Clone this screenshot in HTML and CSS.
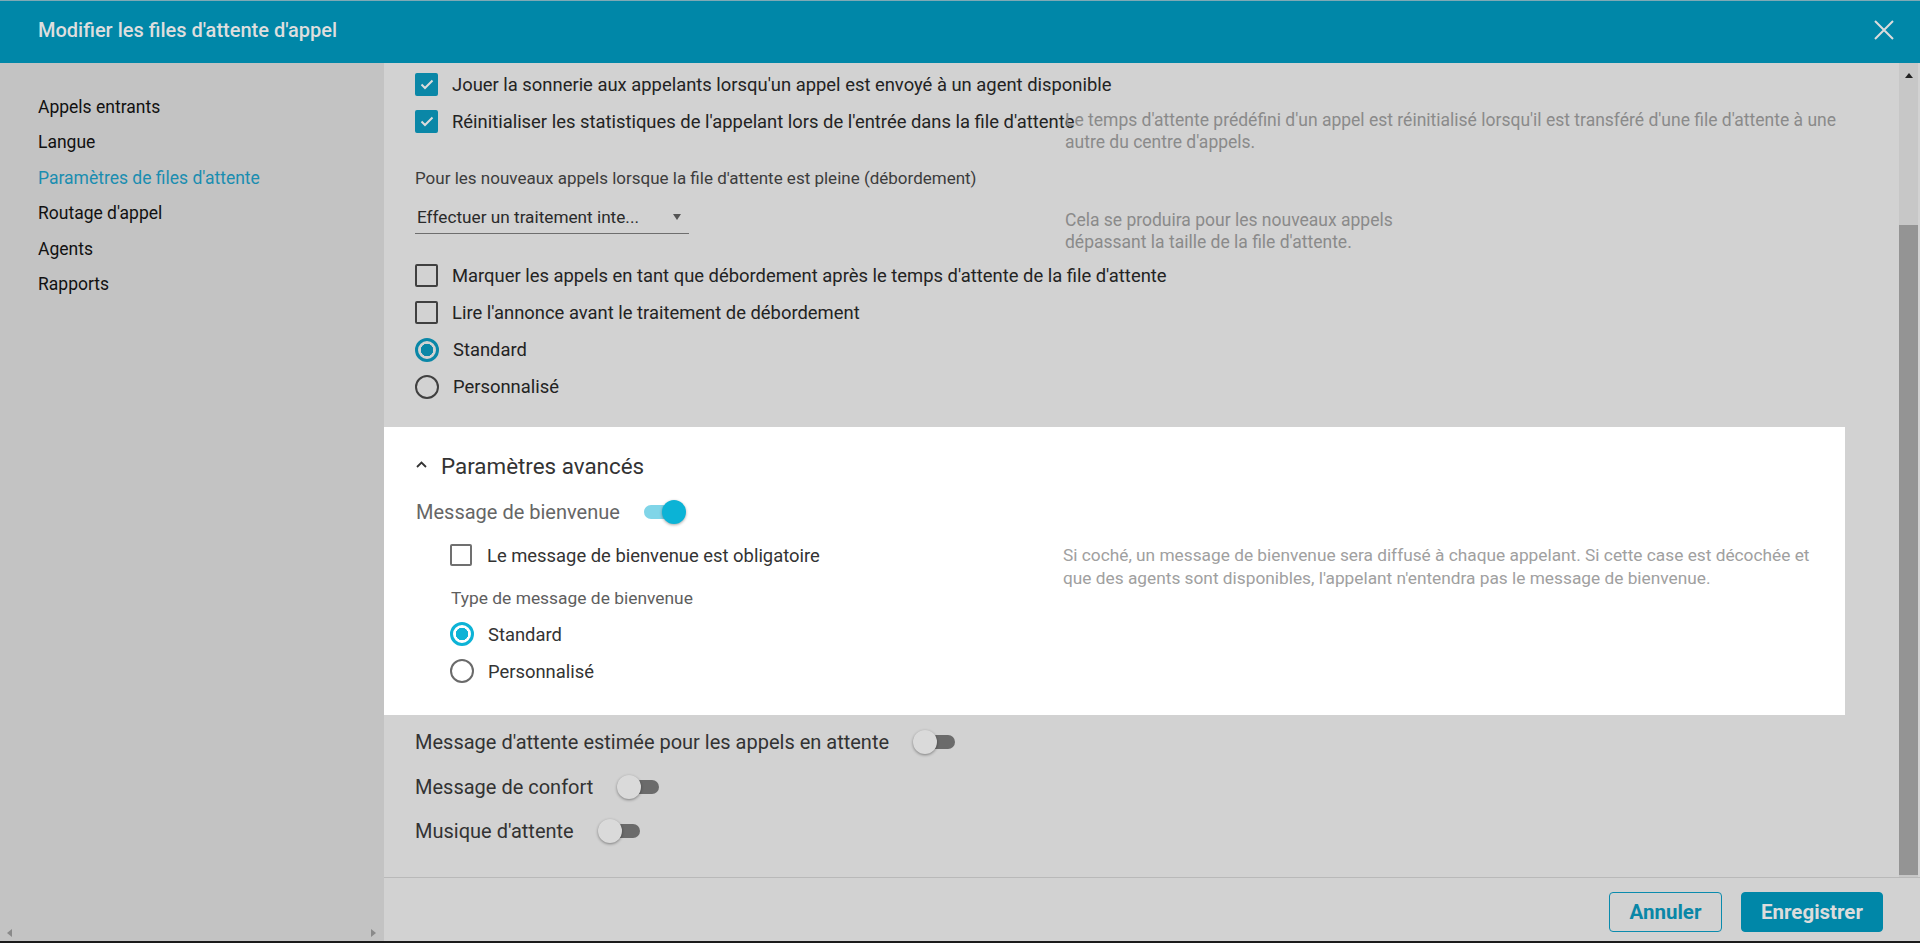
FILE: index.html
```html
<!DOCTYPE html>
<html lang="fr">
<head>
<meta charset="utf-8">
<title>Modifier les files d'attente d'appel</title>
<link rel="stylesheet" href="styles.css">
</head>
<body>
<div class="app">
  <header class="topbar">
    <h1 class="title">Modifier les files d'attente d'appel</h1>
    <span class="close" aria-label="Fermer">
      <svg width="20" height="20" viewBox="0 0 20 20"><path d="M1 1 L19 19 M19 1 L1 19" stroke="#dcdcdc" stroke-width="2" fill="none"/></svg>
    </span>
  </header>
  <div class="body">
    <aside class="sidebar">
      <nav class="nav">
        <div class="nav-item">Appels entrants</div>
        <div class="nav-item">Langue</div>
        <div class="nav-item active">Paramètres de files d'attente</div>
        <div class="nav-item">Routage d'appel</div>
        <div class="nav-item">Agents</div>
        <div class="nav-item">Rapports</div>
      </nav>
      <div class="hscroll">
        <span class="tri-left"></span>
        <span class="tri-right"></span>
      </div>
    </aside>
    <main class="main">
      <div class="scroller">
        <div class="content">
          <div class="row">
            <div class="ctl"><span class="cb checked"><svg width="14" height="11" viewBox="0 0 14 11"><path d="M1.5 5.5 L5 9 L12.5 1.5" stroke="#dcdcdc" stroke-width="2" fill="none"/></svg></span><span class="lbl">Jouer la sonnerie aux appelants lorsqu'un appel est envoyé à un agent disponible</span></div>
          </div>
          <div class="row">
            <div class="ctl"><span class="cb checked"><svg width="14" height="11" viewBox="0 0 14 11"><path d="M1.5 5.5 L5 9 L12.5 1.5" stroke="#dcdcdc" stroke-width="2" fill="none"/></svg></span><span class="lbl">Réinitialiser les statistiques de l'appelant lors de l'entrée dans la file d'attente</span></div>
            <div class="hint">Le temps d'attente prédéfini d'un appel est réinitialisé lorsqu'il est transféré d'une file d'attente à une autre du centre d'appels.</div>
          </div>
          <div class="field-label">Pour les nouveaux appels lorsque la file d'attente est pleine (débordement)</div>
          <div class="row row-dd">
            <div class="ctl">
              <div class="select"><span>Effectuer un traitement inte...</span><span class="dd-arrow"></span></div>
            </div>
            <div class="hint hint-dd">Cela se produira pour les nouveaux appels<br>dépassant la taille de la file d'attente.</div>
          </div>
          <div class="row row-gap">
            <div class="ctl"><span class="cb"></span><span class="lbl">Marquer les appels en tant que débordement après le temps d'attente de la file d'attente</span></div>
          </div>
          <div class="row">
            <div class="ctl"><span class="cb"></span><span class="lbl">Lire l'annonce avant le traitement de débordement</span></div>
          </div>
          <div class="row">
            <div class="ctl"><span class="rb checked"></span><span class="lbl">Standard</span></div>
          </div>
          <div class="row">
            <div class="ctl"><span class="rb"></span><span class="lbl">Personnalisé</span></div>
          </div>

          <section class="panel">
            <div class="panel-head">
              <svg class="chev" width="11" height="7" viewBox="0 0 11 7"><path d="M1 6 L5.5 1.5 L10 6" stroke="#333" stroke-width="1.8" fill="none"/></svg>
              <span>Paramètres avancés</span>
            </div>
            <div class="toggle-row tr-welcome">
              <span class="tlabel muted">Message de bienvenue</span>
              <span class="toggle on"><span class="track"></span><span class="knob"></span></span>
            </div>
            <div class="row prow-cb">
              <div class="ctl ctl-panel"><span class="cb light"></span><span class="lbl lbl-panel">Le message de bienvenue est obligatoire</span></div>
              <div class="hint hint-panel">Si coché, un message de bienvenue sera diffusé à chaque appelant. Si cette case est décochée et que des agents sont disponibles, l'appelant n'entendra pas le message de bienvenue.</div>
            </div>
            <div class="sub-label">Type de message de bienvenue</div>
            <div class="row prow-radio first">
              <div class="ctl ctl-panel"><span class="rb checked bright"></span><span class="lbl lbl-panel">Standard</span></div>
            </div>
            <div class="row prow-radio">
              <div class="ctl ctl-panel"><span class="rb light"></span><span class="lbl lbl-panel">Personnalisé</span></div>
            </div>
          </section>

          <div class="lower">
            <div class="toggle-row lrow">
              <span class="tlabel">Message d'attente estimée pour les appels en attente</span>
              <span class="toggle off"><span class="track"></span><span class="knob"></span></span>
            </div>
            <div class="toggle-row lrow">
              <span class="tlabel">Message de confort</span>
              <span class="toggle off"><span class="track"></span><span class="knob"></span></span>
            </div>
            <div class="toggle-row lrow">
              <span class="tlabel">Musique d'attente</span>
              <span class="toggle off"><span class="track"></span><span class="knob"></span></span>
            </div>
          </div>
        </div>
        <div class="vscroll">
          <span class="tri-up"></span>
          <div class="thumb"></div>
        </div>
      </div>
      <footer class="footer">
        <button class="btn btn-outline">Annuler</button>
        <button class="btn btn-primary">Enregistrer</button>
      </footer>
    </main>
  </div>
  <div class="edge"></div>
</div>
</body>
</html>
```
FILE: styles.css
```css
* { box-sizing: border-box; }
html, body { margin: 0; padding: 0; }
body {
  width: 1920px;
  height: 943px;
  overflow: hidden;
  font-family: Roboto, "Noto Sans", Arial, sans-serif;
  color: #222;
  background: #d2d2d2;
}
.app { display: flex; flex-direction: column; height: 943px; }

/* header */
.topbar {
  height: 63px;
  flex: none;
  background: #0087a8;
  border-top: 1px solid #7fa9b5;
  display: flex;
  align-items: center;
  justify-content: space-between;
  padding: 0 26px 0 38px;
}
.title {
  margin: 0;
  font-size: 20px;
  font-weight: 500;
  color: #dedede;
  margin-top: -4px;
}
.close { display: flex; margin-top: -4px; }

.body { flex: 1; display: flex; min-height: 0; }

/* sidebar */
.sidebar {
  width: 384px;
  flex: none;
  background: #c3c3c3;
  display: flex;
  flex-direction: column;
  justify-content: space-between;
}
.nav { padding-top: 27px; }
.nav-item {
  height: 35.4px;
  line-height: 35.4px;
  padding-left: 38px;
  font-size: 17.5px;
  color: #111;
}
.nav-item.active { color: #1a8db0; }
.hscroll {
  height: 16px;
  display: flex;
  justify-content: space-between;
  align-items: center;
  padding: 0 8px 0 7px;
}
.tri-left { width: 0; height: 0; border-top: 4px solid transparent; border-bottom: 4px solid transparent; border-right: 5px solid #8a8a8a; }
.tri-right { width: 0; height: 0; border-top: 4px solid transparent; border-bottom: 4px solid transparent; border-left: 5px solid #8a8a8a; }

/* main */
.main { flex: 1; display: flex; flex-direction: column; min-width: 0; }
.scroller { flex: 1; display: flex; min-height: 0; }
.content {
  flex: 1;
  overflow: hidden;
  padding: 3px 53px 0 31px;
  min-width: 0;
}
.vscroll {
  width: 22px;
  flex: none;
  display: flex;
  flex-direction: column;
  align-items: stretch;
  padding: 0 2px 2px 1px;
  background: linear-gradient(to right, #d2d2d2 0 1px, #c7c7c7 1px 20px, #d2d2d2 20px);
}
.tri-up {
  align-self: center;
  margin-top: 10px;
  width: 0; height: 0;
  border-left: 4px solid transparent;
  border-right: 4px solid transparent;
  border-bottom: 5px solid #222;
}
.thumb { margin-top: auto; height: 650px; background: #949494; }

.row { display: flex; align-items: center; height: 37px; }
.ctl {
  width: 650px;
  flex: none;
  display: flex;
  align-items: center;
  white-space: nowrap;
}
.lbl { font-size: 18.4px; color: #232323; }
.hint {
  flex: 1;
  align-self: flex-start;
  margin-top: 7px;
  font-size: 17.5px;
  line-height: 21.5px;
  color: #8a8a8a;
  position: relative;
}

.cb {
  width: 23px;
  height: 23px;
  flex: none;
  border: 2.5px solid #404040;
  border-radius: 2px;
  margin-right: 14px;
  display: flex;
  align-items: center;
  justify-content: center;
}
.cb.checked { background: #0a87a7; border-color: #0a87a7; }
.cb.light { border-color: #707070; width: 22px; height: 22px; margin-right: 15px; }

.rb {
  width: 24px;
  height: 24px;
  flex: none;
  border-radius: 50%;
  border: 2.5px solid #404040;
  margin-right: 14px;
}
.rb.checked {
  border: 3px solid #0a87a7;
  background: radial-gradient(circle, #0a87a7 0 6px, transparent 6.5px);
}
.rb.checked.bright {
  border-color: #0db3d6;
  background: radial-gradient(circle, #0db3d6 0 6px, transparent 6.5px);
}
.rb.light { border-color: #6a6a6a; }

.field-label {
  margin-top: 27px;
  height: 22px;
  line-height: 22px;
  font-size: 17px;
  color: #3c3c3c;
}
.row-dd { height: 34px; margin-top: 11px; align-items: stretch; }
.row-dd .ctl { align-items: stretch; }
.select {
  width: 274px;
  height: 34px;
  border-bottom: 1px solid #6e6e6e;
  display: flex;
  align-items: center;
  justify-content: space-between;
  padding: 0 8px 0 2px;
  font-size: 17.2px;
  color: #2a2a2a;
}
.dd-arrow {
  width: 0; height: 0;
  border-left: 4px solid transparent;
  border-right: 4px solid transparent;
  border-top: 6px solid #555;
}
.hint-dd { margin-top: 9px; line-height: 22px; }
.row-gap { margin-top: 23px; }
.row-gap ~ .row { }

/* panel */
.panel {
  background: #ffffff;
  margin: 22px 0 0 -31px;
  padding: 25px 0 25.5px 32px;
  height: 288px;
}
.panel-head {
  height: 28px;
  display: flex;
  align-items: center;
  font-size: 22.4px;
  color: #333;
}
.chev { margin-right: 14px; margin-top: -4px; }
.toggle-row { display: flex; align-items: center; }
.tr-welcome { margin-top: 16px; height: 32px; }
.tlabel { font-size: 20px; color: #333; white-space: nowrap; }
.tlabel.muted { color: #666; }

.toggle {
  position: relative;
  width: 42px;
  height: 24px;
  margin-left: 24px;
  flex: none;
}
.toggle .track {
  position: absolute;
  top: 5px;
  width: 37px;
  height: 14px;
  border-radius: 7px;
}
.toggle .knob {
  position: absolute;
  top: 0;
  width: 24px;
  height: 24px;
  border-radius: 50%;
}
.toggle.on .track { left: 0; background: #80d5e8; }
.toggle.on .knob { right: 0; background: #0bb3d6; box-shadow: 0 1px 3px rgba(0,0,0,0.35); }
.toggle.off .track { right: 0; background: #6b6b6b; }
.toggle.off .knob { left: 0; background: #dadada; box-shadow: 0 1px 3px rgba(0,0,0,0.4); }

.prow-cb { margin-top: 8.5px; }
.ctl-panel { width: 647px; padding-left: 34px; }
.lbl-panel { color: #333; }
.hint-panel { margin-top: 7px; line-height: 23px; color: #a0a0a0; font-size: 17.3px; padding-right: 18px; }
.sub-label {
  margin-top: 13.5px;
  height: 22px;
  line-height: 22px;
  padding-left: 35px;
  font-size: 17.4px;
  color: #5e5e5e;
}
.prow-radio.first { margin-top: 6.5px; }

.lower { padding-top: 5px; }
.lrow { height: 44.5px; }

/* footer */
.footer {
  height: 64px;
  flex: none;
  border-top: 1px solid #b9b9b9;
  display: flex;
  justify-content: flex-end;
  align-items: flex-start;
  gap: 19px;
  padding: 14px 37px 0 0;
}
.btn {
  height: 40px;
  border-radius: 4px;
  font-family: Roboto, "Noto Sans", Arial, sans-serif;
  font-size: 20.5px;
  font-weight: 700;
  padding: 0;
  cursor: pointer;
}
.btn-outline {
  width: 113px;
  background: transparent;
  border: 1px solid #0a8bad;
  color: #0a87a7;
}
.btn-primary {
  width: 142px;
  background: #0087a8;
  border: 1px solid #0087a8;
  color: #dcdcdc;
}
.edge { height: 2px; flex: none; background: #1b1b1b; }
```
